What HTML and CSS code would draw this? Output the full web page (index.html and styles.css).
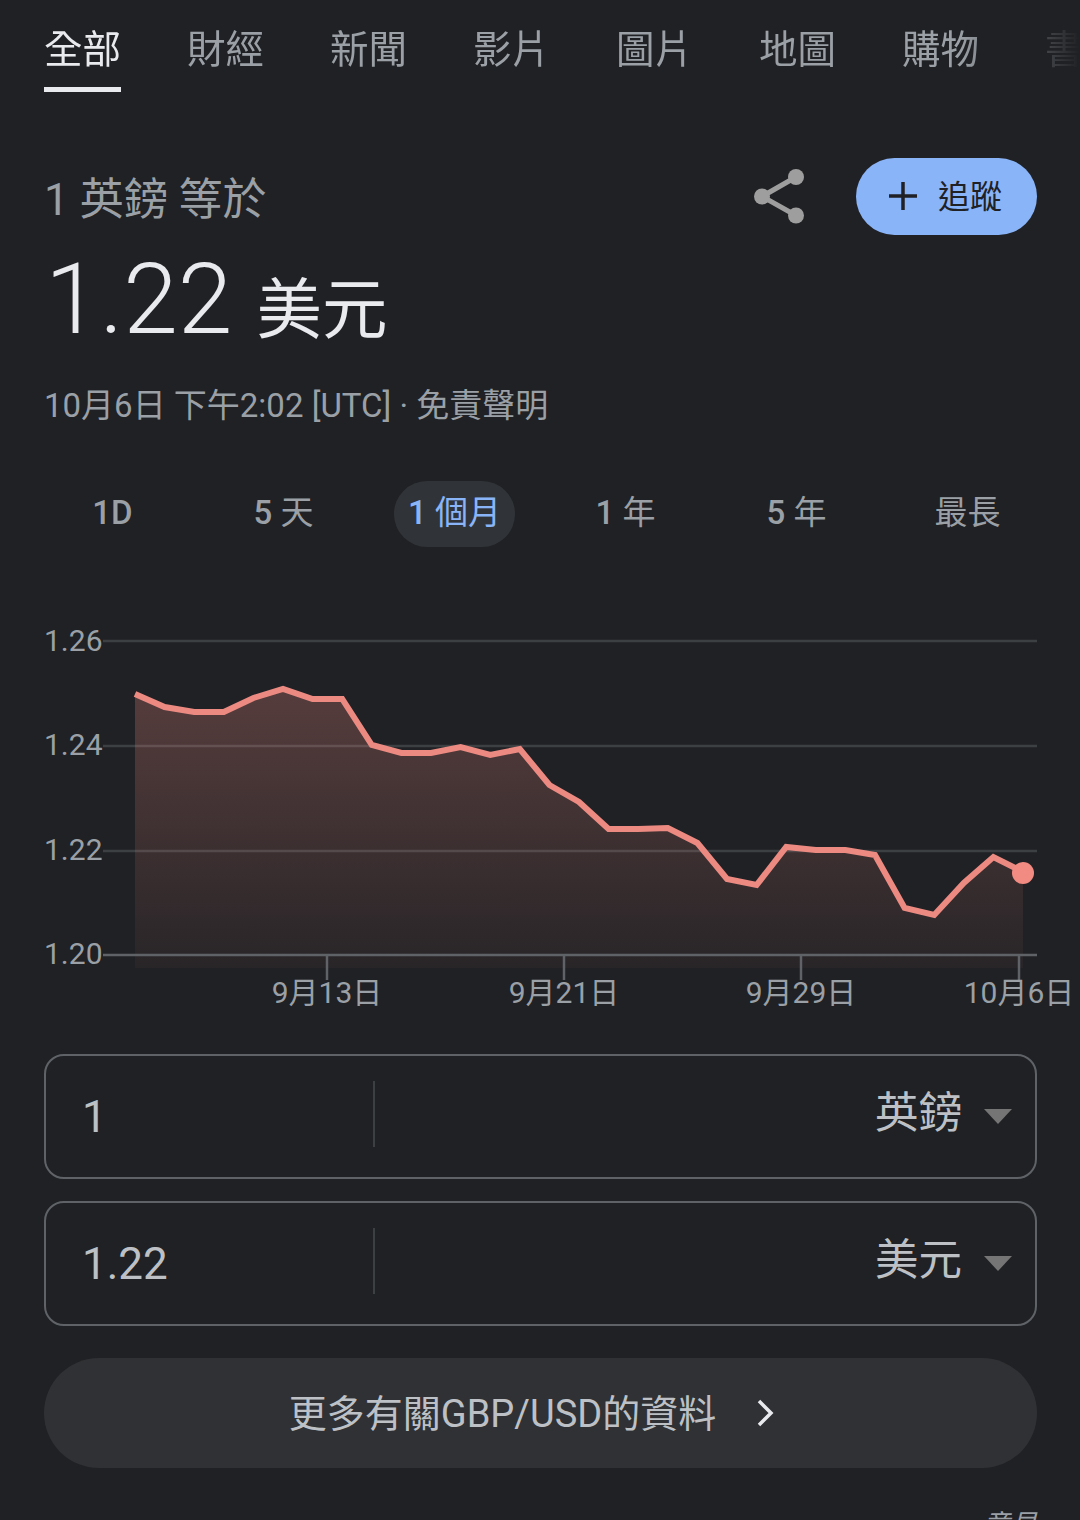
FILE: index.html
```html
<!DOCTYPE html>
<html lang="zh-Hant">
<head>
    <meta charset="UTF-8">
    <meta name="viewport" content="width=device-width, initial-scale=1.0">
    <title>1 英鎊 等於 1.22 美元</title>
    <link rel="stylesheet" href="styles.css">
</head>
<body>
    <nav class="tabs">
        <a class="tab active">全部</a>
        <a class="tab">財經</a>
        <a class="tab">新聞</a>
        <a class="tab">影片</a>
        <a class="tab">圖片</a>
        <a class="tab">地圖</a>
        <a class="tab">購物</a>
        <a class="tab">書籍</a>
    </nav>

    <div class="quote-head">
        <div class="quote-label">1 英鎊 等於</div>
        <svg class="share-icon" width="56" height="60" viewBox="0 0 56 60">
            <path d="M45 11 L11 30.5 L45 49.5" fill="none" stroke="#9e9e9e" stroke-width="5"/>
            <circle cx="45" cy="11" r="8" fill="#9e9e9e"/>
            <circle cx="11" cy="30.5" r="8" fill="#9e9e9e"/>
            <circle cx="45" cy="49.5" r="8" fill="#9e9e9e"/>
        </svg>
        <button class="follow-btn">
            <svg width="32" height="32" viewBox="0 0 32 32">
                <path d="M16 2 V30 M2 16 H30" stroke="#202124" stroke-width="3.5"/>
            </svg>
            <span class="follow-text">追蹤</span>
        </button>
    </div>

    <div class="quote-value"><span class="rate">1.22</span> <span class="currency">美元</span></div>
    <div class="quote-date">10月6日 下午2:02 [UTC] · 免責聲明</div>

    <div class="ranges">
        <span class="range bold">1D</span>
        <span class="range"><b>5</b> 天</span>
        <span class="range selected"><b>1</b> 個月</span>
        <span class="range"><b>1</b> 年</span>
        <span class="range"><b>5</b> 年</span>
        <span class="range">最長</span>
    </div>

    <svg class="chart" width="1080" height="400" viewBox="0 620 1080 400">
        <defs>
            <linearGradient id="area" x1="0" y1="0" x2="0" y2="1">
                <stop offset="0" stop-color="#f28b82" stop-opacity="0.26"/>
                <stop offset="1" stop-color="#f28b82" stop-opacity="0.04"/>
            </linearGradient>
        </defs>
        <g class="grid-lines">
            <line x1="103" y1="641" x2="1037" y2="641"/>
            <line x1="103" y1="746" x2="1037" y2="746"/>
            <line x1="103" y1="851" x2="1037" y2="851"/>
        </g>
        <polygon fill="url(#area)" points="135,968 135,694 164.6,707 194.2,712 223.8,712 253.4,698 283,689 312.6,699 342.2,699 371.8,745 401.4,753 431,753 460.6,747 490.2,755 519.8,749 549.4,785 579,802 608.6,829 638.2,829 667.8,828 697.4,843 727,879 756.6,885 786.2,847 815.8,850 845.4,850 875,855 904.6,908 934.2,915 963.8,883 993.4,857 1023,872 1023,968"/>
        <g class="axis-lines">
            <line x1="103" y1="955" x2="1037" y2="955"/>
            <line x1="327" y1="955" x2="327" y2="980"/>
            <line x1="564" y1="955" x2="564" y2="980"/>
            <line x1="801" y1="955" x2="801" y2="980"/>
            <line x1="1019" y1="955" x2="1019" y2="980"/>
        </g>
        <polyline class="price-line" points="135,694 164.6,707 194.2,712 223.8,712 253.4,698 283,689 312.6,699 342.2,699 371.8,745 401.4,753 431,753 460.6,747 490.2,755 519.8,749 549.4,785 579,802 608.6,829 638.2,829 667.8,828 697.4,843 727,879 756.6,885 786.2,847 815.8,850 845.4,850 875,855 904.6,908 934.2,915 963.8,883 993.4,857 1023,872"/>
        <circle cx="1023" cy="873" r="11" fill="#f28b82"/>
        <g class="axis-text">
            <text x="44" y="651">1.26</text>
            <text x="44" y="755">1.24</text>
            <text x="44" y="860">1.22</text>
            <text x="44" y="964">1.20</text>
            <text x="327" y="1003" text-anchor="middle">9月13日</text>
            <text x="564" y="1003" text-anchor="middle">9月21日</text>
            <text x="801" y="1003" text-anchor="middle">9月29日</text>
            <text x="1019" y="1003" text-anchor="middle">10月6日</text>
        </g>
    </svg>

    <div class="converter">
        <div class="amount">1</div>
        <div class="unit">英鎊</div>
        <span class="caret"></span>
    </div>
    <div class="converter">
        <div class="amount">1.22</div>
        <div class="unit">美元</div>
        <span class="caret"></span>
    </div>

    <a class="more-btn">
        <span class="more-text">更多有關GBP/USD的資料</span>
        <svg width="20" height="28" viewBox="0 0 20 28">
            <path d="M3 2 L15 14 L3 26" fill="none" stroke="#e8eaed" stroke-width="3.5"/>
        </svg>
    </a>

    <div class="feedback">意見</div>
</body>
</html>
```

FILE: styles.css
```css
html, body { margin: 0; padding: 0; }
body { width: 1080px; height: 1520px; overflow: hidden; background-color: #202124; color: #e8eaed; font-family: Roboto, 'Noto Sans CJK TC', sans-serif; }

.tabs { display: flex; gap: 66px; padding: 0 0 0 44px; height: 92px; white-space: nowrap; overflow: hidden; -webkit-mask-image: linear-gradient(to right, #000 960px, transparent 1080px); mask-image: linear-gradient(to right, #000 960px, transparent 1080px); }
.tab { flex: none; box-sizing: border-box; width: 77px; height: 92px; padding-top: 23px; font-size: 38.5px; line-height: 54px; text-align: center; color: #9aa0a6; }
.tab.active { color: #e8eaed; border-bottom: 5px solid #e8eaed; }

.quote-head { display: flex; align-items: center; margin: 66px 43px 0 44px; height: 76px; }
.quote-label { flex: 1; font-size: 44px; line-height: 76px; padding-top: 7px; color: #9aa0a6; }
.share-icon { margin-right: 49px; }
.follow-btn { display: flex; align-items: center; gap: 19px; box-sizing: border-box; width: 181px; height: 77px; padding: 0 0 0 31px; border: 0; border-radius: 39px; background-color: #8ab4f8; color: #202124; font-family: inherit; font-size: 32px; }
.follow-text { padding-bottom: 4px; }

.quote-value { margin: 16px 0 0 45px; height: 100px; line-height: 100px; white-space: nowrap; }
.rate { font-size: 98.5px; font-weight: 300; color: #e8eaed; }
.currency { font-size: 65.5px; margin-left: 20px; }
.quote-date { margin: 32px 0 0 44px; font-size: 33px; line-height: 48px; color: #9aa0a6; }

.ranges { display: grid; grid-template-columns: repeat(6, 171px); margin: 51px 0 0 27px; height: 66px; }
.range { justify-self: center; box-sizing: border-box; height: 66px; padding: 0 14px; border-radius: 33px; font-size: 33px; line-height: 64px; color: #9aa0a6; white-space: nowrap; }
.range b, .range.bold { font-weight: 500; }
.range.selected { background-color: #303438; color: #8ab4f8; }

.chart { display: block; margin-top: 73px; }
.grid-lines line { stroke: #3c4043; stroke-width: 2.5; }
.axis-lines line { stroke: #5f6368; stroke-width: 2.5; }
.price-line { fill: none; stroke: #ec8a82; stroke-width: 6; }
.axis-text text { font-size: 30px; fill: #9aa0a6; }

.converter { display: flex; align-items: center; box-sizing: border-box; width: 993px; height: 125px; margin: 34px 0 0 44px; border: 2px solid #5f6368; border-radius: 20px; }
.converter + .converter { margin-top: 22px; }
.amount { box-sizing: border-box; width: 329px; height: 66px; margin-bottom: 6px; padding-left: 36px; border-right: 2px solid #3c4043; font-size: 44px; line-height: 72px; color: #bdc1c6; }
.unit { flex: 1; text-align: right; font-size: 43.5px; color: #bdc1c6; padding-bottom: 15px; }
.caret { width: 0; height: 0; margin: 0 23px 0 22px; border-left: 14px solid transparent; border-right: 14px solid transparent; border-top: 15px solid #757575; }

.more-btn { display: flex; align-items: center; justify-content: center; gap: 40px; box-sizing: border-box; width: 993px; height: 110px; margin: 32px 0 0 44px; padding-right: 16px; border-radius: 55px; background-color: #303134; font-size: 38px; color: #bdc1c6; }
.more-text { padding-bottom: 6px; }

.feedback { margin: 37px 43px 0 0; text-align: right; font-size: 27px; font-style: italic; line-height: 40px; color: #9aa0a6; }
```
